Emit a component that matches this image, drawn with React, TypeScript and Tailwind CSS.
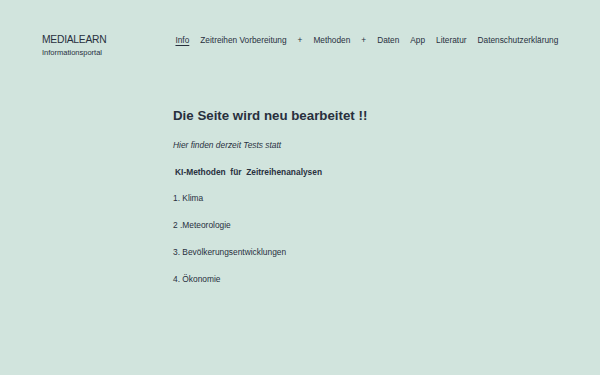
import React from "react";

export default function App() {
  const nav = ["Zeitreihen Vorbereitung", "+", "Methoden", "+", "Daten", "App", "Literatur", "Datenschutzerklärung"];
  return (
    <div className="w-[600px] h-[375px] bg-[#d1e4dd] text-[#28303d] overflow-hidden" style={{ fontFamily: '"Liberation Sans", Arial, sans-serif' }}>
      <header className="flex items-start pt-[33px] pl-[42px]">
        <div className="flex flex-col">
          <div className="text-[10.3px] leading-[14px] tracking-[-0.25px]">MEDIALEARN</div>
          <div className="text-[7.5px] leading-[10px] mt-[1px]">Informationsportal</div>
        </div>
        <nav className="flex items-center ml-[69px] text-[8.3px] leading-[14px] gap-[11px]">
          <span className="underline underline-offset-2">Info</span>
          {nav.map((n, i) => (
            <span key={i}>{n}</span>
          ))}
        </nav>
      </header>
      <main className="pl-[173px] pt-[48px]">
        <h1 className="text-[13.3px] leading-[20px] font-bold">Die Seite wird neu bearbeitet !!</h1>
        <p className="italic text-[8.4px] leading-[12px] mt-[13px]">Hier finden derzeit Tests statt</p>
        <p className="font-bold text-[8.4px] leading-[12px] mt-[15px] pl-[2px] whitespace-pre">KI-Methoden  für  Zeitreihenanalysen</p>
        <div className="flex flex-col text-[8.4px] leading-[12px] mt-[14px] gap-[15px]">
          <p>1. Klima</p>
          <p>2 .Meteorologie</p>
          <p>3. Bevölkerungsentwicklungen</p>
          <p>4. Ökonomie</p>
        </div>
      </main>
    </div>
  );
}
